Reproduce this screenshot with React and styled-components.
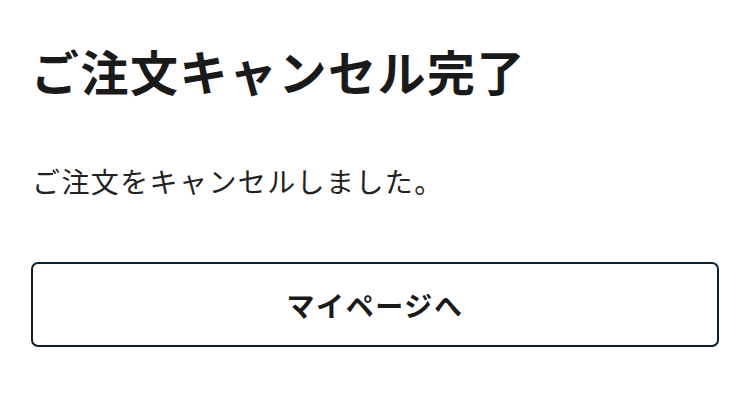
import React from "react";
import styled, { createGlobalStyle } from "styled-components";

const Global = createGlobalStyle`
  html, body { margin: 0; padding: 0; background: #ffffff; }
  body { font-family: "Noto Sans CJK JP", "Noto Sans", sans-serif; color: #1a1a1a; }
`;

const Page = styled.main`
  display: flex;
  flex-direction: column;
  padding: 34px 31px 0;
`;

const Title = styled.h1`
  margin: 0;
  font-size: 48px;
  font-weight: 700;
  line-height: 72px;
  letter-spacing: 1.5px;
  color: #1a1a1a;
`;

const Message = styled.p`
  margin: 55px 0 0 1px;
  font-size: 28px;
  font-weight: 400;
  line-height: 40px;
  letter-spacing: 1.4px;
  color: #222222;
`;

const Button = styled.button`
  margin-top: 61px;
  height: 85px;
  width: 100%;
  box-sizing: border-box;
  border: 2px solid #0d1f2d;
  border-radius: 7px;
  background: #ffffff;
  font-family: inherit;
  font-size: 28px;
  font-weight: 700;
  letter-spacing: 1.6px;
  color: #1a1a1a;
  cursor: pointer;
`;

export default function App() {
  return (
    <>
      <Global />
      <Page>
        <Title>ご注文キャンセル完了</Title>
        <Message>ご注文をキャンセルしました。</Message>
        <Button>マイページへ</Button>
      </Page>
    </>
  );
}
